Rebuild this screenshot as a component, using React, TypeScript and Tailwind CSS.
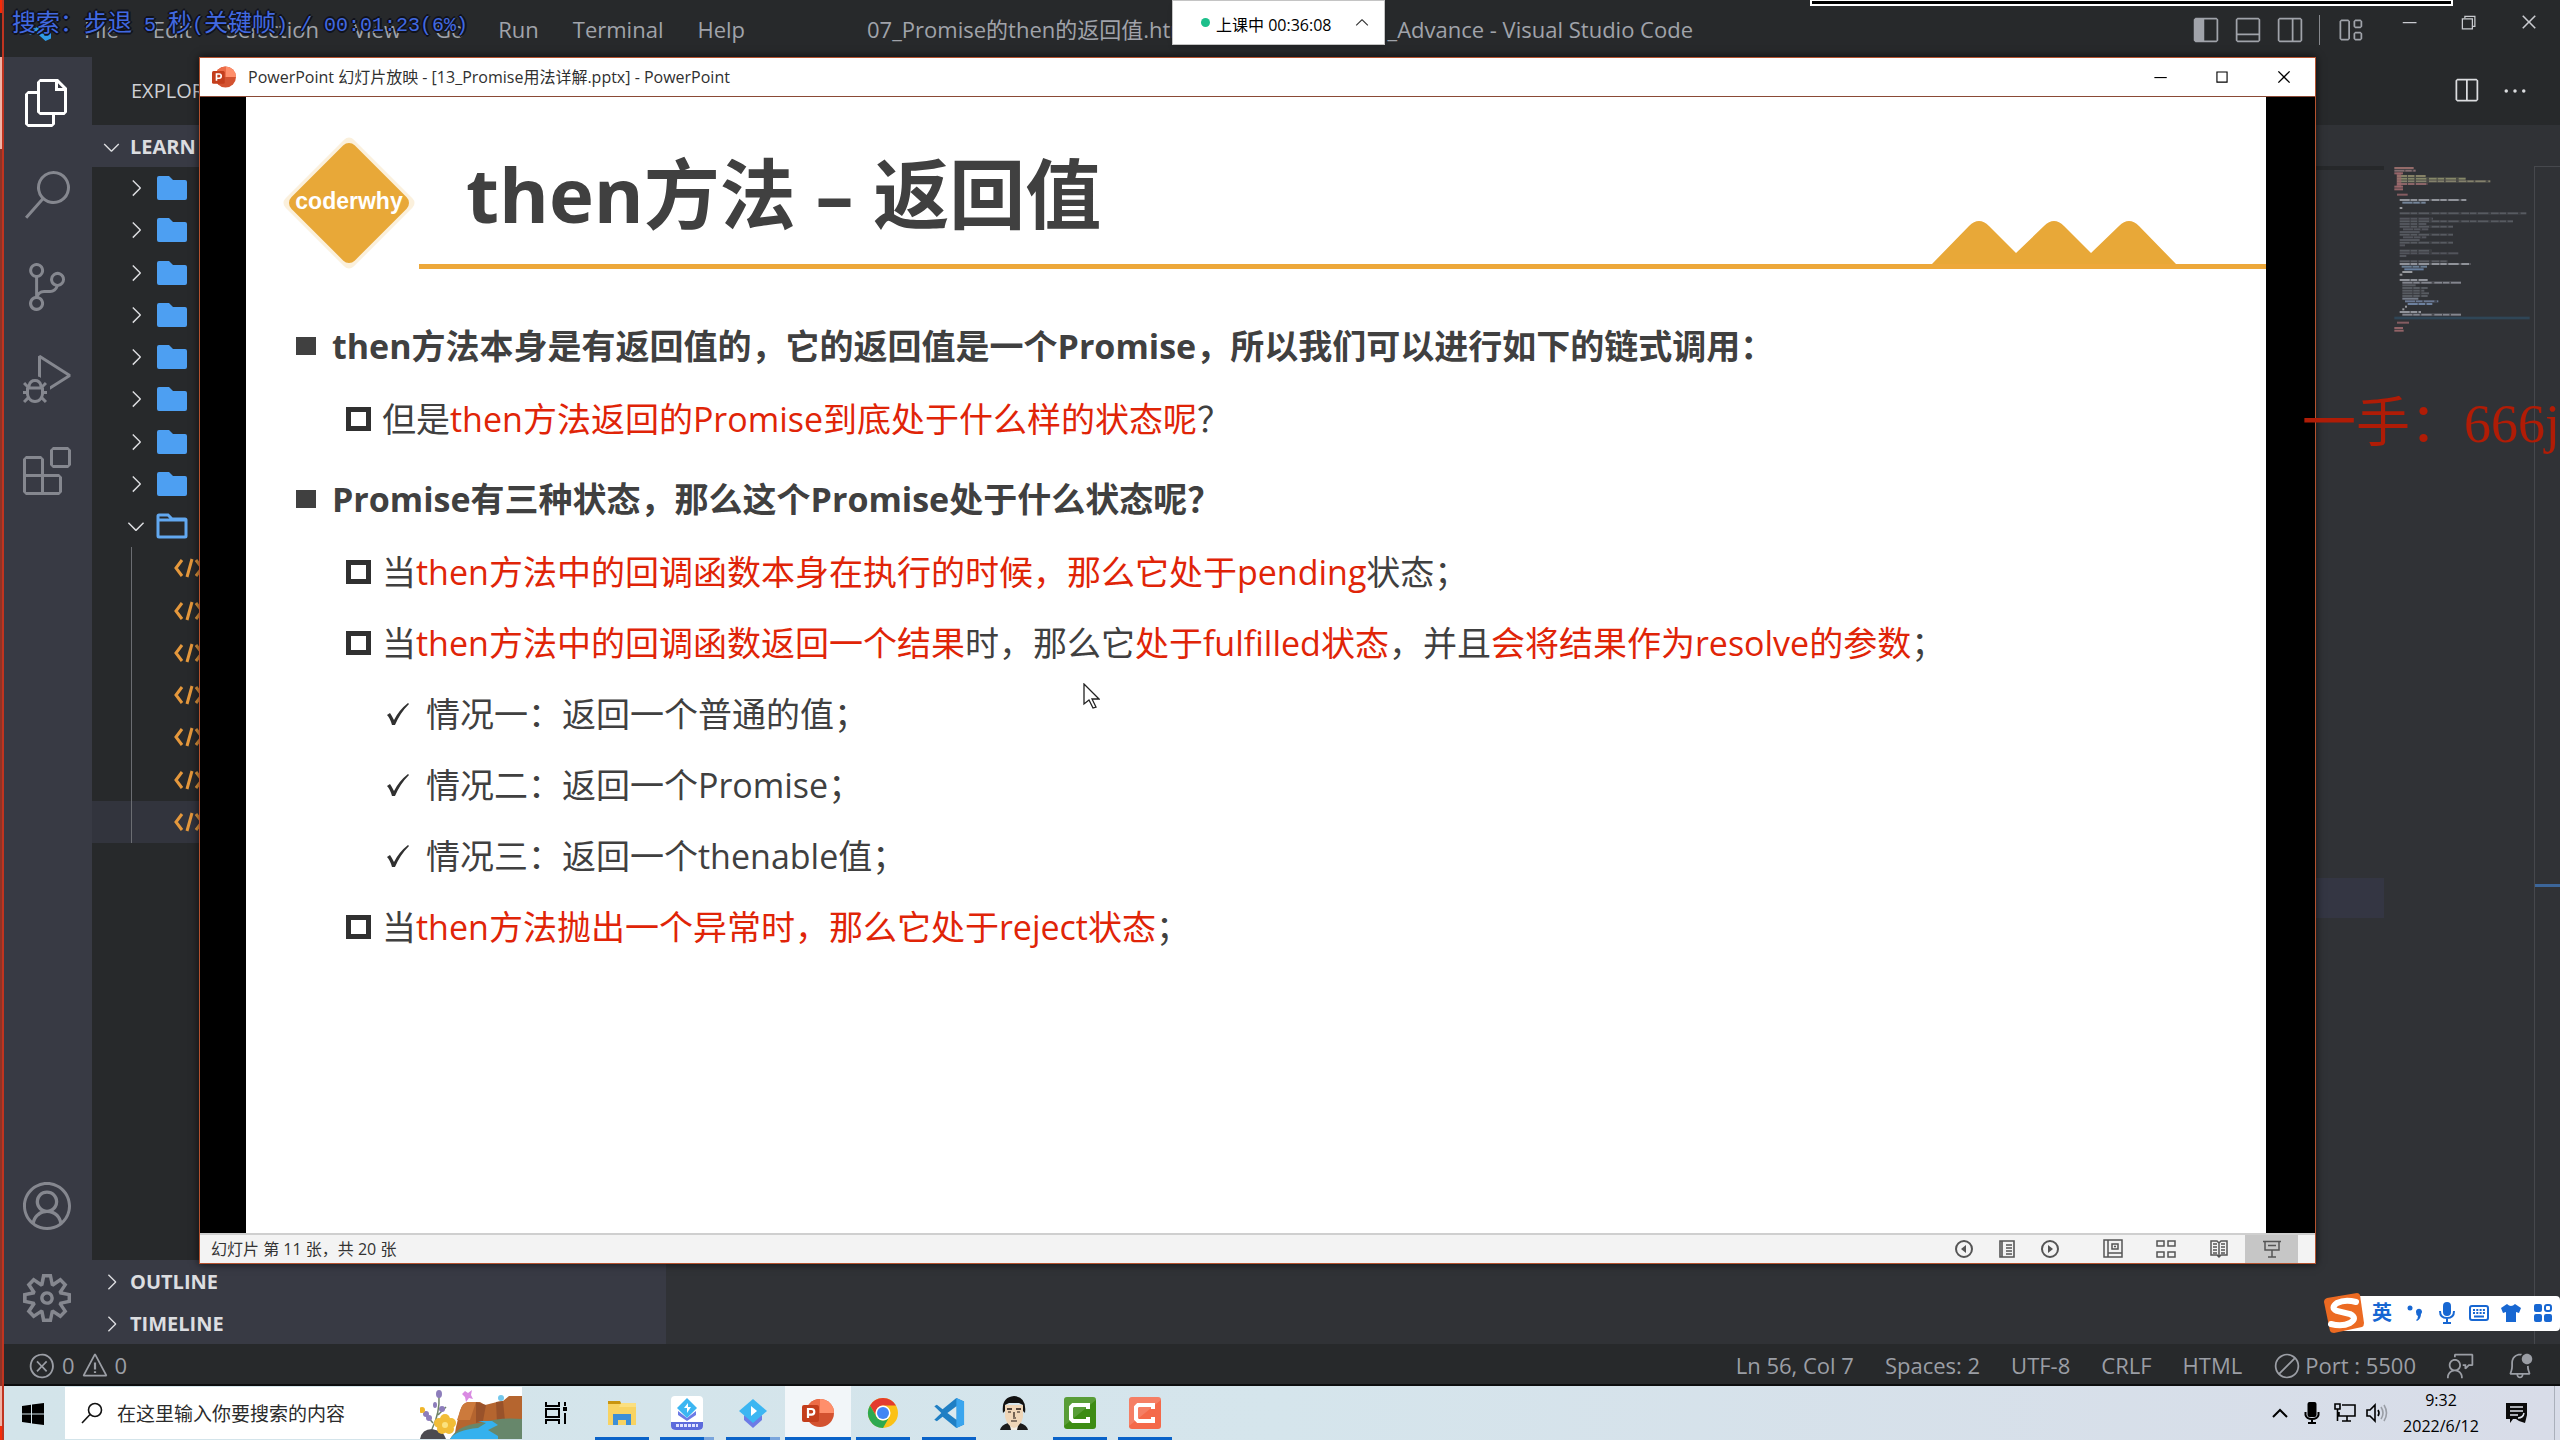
import React from 'react';
import {
  VscFiles, VscSearch, VscSourceControl, VscDebugAlt, VscExtensions, VscAccount, VscSettingsGear,
  VscChevronRight, VscChevronDown, VscChevronUp, VscLayoutSidebarLeft, VscLayoutPanelOff,
  VscLayoutSidebarRightOff, VscLayout, VscChromeMinimize, VscChromeRestore, VscChromeClose,
  VscChromeMaximize, VscSplitHorizontal, VscEllipsis, VscError, VscWarning, VscCircleSlash,
  VscFeedback, VscBellDot,
} from 'react-icons/vsc';

type IconType = React.ComponentType<{ className?: string }>;

function IconButton({ label, className, children }: { label: string; className?: string; children: React.ReactNode }) {
  return (
    <button type="button" aria-label={label} className={`flex shrink-0 items-center justify-center ${className ?? ''}`}>
      {children}
    </button>
  );
}

/* ---------- editor: title bar ---------- */

function VsCodeLogo({ className }: { className?: string }) {
  return (
    <svg viewBox="0 0 100 100" className={className} aria-hidden="true">
      <path d="M73 3 97 14v72L73 97 30 62 12 76 4 71 26 50 4 29l8-5 18 14z" fill="#1f7fc4" />
      <path d="M73 3 97 14v72L73 97z" fill="#3aa5ee" />
      <path d="M73 29v42L45 50z" fill="#dbe9ee" />
    </svg>
  );
}

function TitleBar() {
  const menus = ['File', 'Edit', 'Selection', 'View', 'Go', 'Run', 'Terminal', 'Help'];
  return (
    <header className="flex h-[57px] shrink-0 items-center bg-[#27292b] pt-[2px] text-[22px] text-[#a0a3aa]">
      <svg viewBox="0 0 24 24" className="ml-7 h-6 w-6" aria-hidden="true">
        <path d="M17.5 1 23 3.500v17L17.500 23 7 13.500 3 17 1 16V8l2-1 4 3.500z" fill="#2f9be8" />
      </svg>
      <nav className="ml-8 flex gap-[34px]">
        {menus.map((m) => (
          <button key={m} type="button">{m}</button>
        ))}
      </nav>
      <div className="ml-[122px] flex w-[826px] shrink-0 justify-between whitespace-nowrap">
        <span>07_Promise的then的返回值.html</span>
        <span>_Advance - Visual Studio Code</span>
      </div>
      <div className="ml-auto flex items-center text-[28px]">
        <IconButton label="Toggle primary side bar" className="w-[42px]"><VscLayoutSidebarLeft /></IconButton>
        <IconButton label="Toggle panel" className="w-[42px]"><VscLayoutPanelOff /></IconButton>
        <IconButton label="Toggle secondary side bar" className="w-[42px]"><VscLayoutSidebarRightOff /></IconButton>
        <span className="ml-2 h-[30px] w-px bg-[#85878c]" />
        <IconButton label="Customize layout" className="w-[60px]"><VscLayout /></IconButton>
      </div>
      <div className="mb-4 flex items-center text-xl text-[#c9cbd0]">
        <IconButton label="Minimize" className="w-[58px]"><VscChromeMinimize /></IconButton>
        <IconButton label="Restore" className="w-[60px]"><VscChromeRestore /></IconButton>
        <IconButton label="Close" className="w-[62px]"><VscChromeClose /></IconButton>
      </div>
    </header>
  );
}

/* ---------- editor: activity bar and explorer ---------- */

function ActivityBar() {
  const top: [string, IconType][] = [
    ['Explorer', VscFiles],
    ['Search', VscSearch],
    ['Source control', VscSourceControl],
    ['Run and debug', VscDebugAlt],
    ['Extensions', VscExtensions],
  ];
  const bottom: [string, IconType][] = [
    ['Accounts', VscAccount],
    ['Manage', VscSettingsGear],
  ];
  return (
    <nav className="flex w-[92px] shrink-0 flex-col justify-between bg-[#383a44] pl-[2px] text-5xl text-[#85878f]">
      <div>
        {top.map(([name, Icon], i) => (
          <IconButton key={name} label={name} className={i === 0 ? 'h-[92px] w-full text-white' : 'h-[92px] w-full'}>
            <Icon />
          </IconButton>
        ))}
      </div>
      <div>
        {bottom.map(([name, Icon]) => (
          <IconButton key={name} label={name} className="h-[92px] w-full"><Icon /></IconButton>
        ))}
      </div>
    </nav>
  );
}

function FolderIcon({ open }: { open?: boolean }) {
  return (
    <svg viewBox="0 0 32 26" className="h-[26px] w-8" aria-hidden="true">
      {open ? (
        <path d="M3 2h9l4 4h13q1 0 1 1v16q0 1-1 1H3q-1 0-1-1V3q0-1 1-1zM2 7h28" fill="none" stroke="#62a8f0" strokeWidth="3" />
      ) : (
        <path d="M3 1h10l4 4h12q2 0 2 2v16q0 2-2 2H3q-2 0-2-2V3q0-2 2-2z" fill="#4d9ff2" />
      )}
    </svg>
  );
}

function SectionHeader({ title, open }: { title: string; open?: boolean }) {
  return (
    <button type="button" className="flex h-[42px] w-full shrink-0 items-center bg-[#383a44] pl-[7px] pt-[2px] text-xl font-bold text-[#dcdde0]">
      <span className="mr-[6px] flex w-[25px] justify-center text-[26px]">{open ? <VscChevronDown /> : <VscChevronRight />}</span>
      {title}
    </button>
  );
}

function Explorer() {
  return (
    <aside className="flex w-[574px] shrink-0 flex-col bg-[#27292b]">
      <h2 className="flex h-[68px] shrink-0 items-center pl-[39px] text-xl text-[#cfd0d4]">EXPLORER</h2>
      <SectionHeader title="LEARN" open />
      <ul className="grid h-[676px] auto-rows-fr">
        {Array.from({ length: 9 }, (_, i) => (
          <li key={i} className="flex items-center pl-[31px]">
            <span className="mr-[7px] text-[26px] text-[#dcdde0]">{i === 8 ? <VscChevronDown /> : <VscChevronRight />}</span>
            <FolderIcon open={i === 8} />
          </li>
        ))}
        {Array.from({ length: 7 }, (_, i) => (
          <li key={i} className={i === 6 ? 'flex bg-[#32343d] pl-[39px]' : 'flex pl-[39px]'}>
            <div className="flex items-center border-l border-[#6b6d72] pl-10">
              <svg viewBox="0 0 36 20" className="h-5 w-9" fill="none" stroke="#e5983c" strokeWidth="3" aria-hidden="true">
                <path d="M10 2 4 10l6 8M20 1l-5 18M24 2l6 8-6 8" />
              </svg>
            </div>
          </li>
        ))}
      </ul>
      <div className="mt-auto">
        <SectionHeader title="OUTLINE" />
        <SectionHeader title="TIMELINE" />
      </div>
    </aside>
  );
}

/* ---------- editor: minimap ---------- */

const minimapLines: [number, number, number, string][] = [
  [0, 4, 58, '#a0716f'], [1, 4, 64, '#8d7478'], [2, 4, 26, '#9d686d'],
  [3, 12, 86, '#8f8a6c'], [4, 12, 206, '#90916f'], [5, 12, 280, '#8d8a72'], [6, 12, 92, '#976a6e'],
  [7, 4, 26, '#9d686d'], [8, 4, 26, '#9d686d'],
  [10, 12, 32, '#8e6166'],
  [12, 20, 200, '#9b9da5'], [13, 28, 70, '#7d8fa5'], [15, 20, 8, '#a5a6ab'],
  [17, 20, 380, '#5c5f66'], [19, 20, 100, '#565960'], [20, 20, 340, '#5c5f66'], [21, 20, 80, '#565960'],
  [22, 20, 160, '#5c5f66'], [23, 30, 76, '#565960'], [24, 20, 60, '#565960'], [25, 20, 160, '#5c5f66'],
  [26, 30, 70, '#565960'], [27, 20, 60, '#565960'], [28, 20, 160, '#5c5f66'], [29, 20, 16, '#565960'],
  [31, 20, 96, '#5c5f66'], [32, 20, 176, '#565960'], [33, 20, 20, '#565960'], [35, 20, 144, '#5f6268'],
  [36, 20, 212, '#9b9da5'], [37, 26, 76, '#71879f'], [38, 34, 58, '#6d86a8'], [39, 28, 30, '#a5a6ab'], [40, 20, 8, '#a5a6ab'],
  [42, 20, 84, '#9b9da5'], [43, 28, 176, '#8d8f98'], [44, 28, 40, '#5c5f66'], [45, 28, 76, '#5c5f66'],
  [46, 28, 66, '#5c5f66'], [47, 28, 80, '#5c5f66'], [48, 28, 76, '#5c5f66'], [49, 28, 48, '#7d8491'],
  [50, 36, 100, '#71809c'], [51, 44, 74, '#7489ab'], [52, 36, 6, '#a5a6ab'], [53, 28, 6, '#a5a6ab'],
  [54, 20, 64, '#9b9da5'], [55, 28, 176, '#8d8f98'],
  [58, 12, 36, '#8e6166'], [60, 4, 26, '#9d686d'], [61, 4, 28, '#9d686d'],
];

function Minimap() {
  return (
    <svg viewBox="0 0 414 528" className="h-[176px] w-[138px]" aria-hidden="true">
      <rect x="4" y="452" width="406" height="8" fill="#2f4657" />
      {minimapLines.map(([row, x, w, color], i) => (
        <rect key={i} x={x} y={row * 8 + 3} width={w} height="6" fill={color} opacity="0.900" />
      ))}
      {minimapLines.map(([row, x, w], i) =>
        w > 60 ? <path key={i} d={`M${x + 30} ${row * 8 + 6}H${x + w}`} stroke="#303236" strokeWidth="6" strokeDasharray="3 19 5 31 8 23" opacity="0.700" /> : null,
      )}
      <path d="M18 20v44" stroke="#9d686d" strokeWidth="14" opacity="0.700" />
    </svg>
  );
}

function EditorArea() {
  return (
    <main className="flex min-w-0 flex-1 flex-col bg-[#303236]">
      <div className="flex h-[68px] shrink-0 items-center justify-end bg-[#27292b] text-[28px] text-[#dcdde0]">
        <IconButton label="Split editor" className="w-12"><VscSplitHorizontal /></IconButton>
        <IconButton label="More actions" className="mr-5 w-[50px]"><VscEllipsis /></IconButton>
      </div>
      <div className="h-[41px] shrink-0" />
      <div className="flex flex-1 justify-end">
        <div className="flex-1">
          <div className="h-1 bg-[#26282a]" />
          <div className="mt-[708px] h-10 bg-[#343643]" />
        </div>
        <div className="ml-[9px]"><Minimap /></div>
        <div className="ml-[3px] w-[26px] border-l border-t border-[#46484d] pt-[717px]">
          <div className="h-[3px] bg-[#3c669a]" />
        </div>
      </div>
    </main>
  );
}

function StatusBar() {
  return (
    <footer className="flex h-[42px] shrink-0 items-center border-b-2 border-[#0c0d0e] bg-[#27292b] pt-[3px] text-[22px] text-[#9b9ea5]">
      <button type="button" className="ml-7 flex items-center gap-[6px]">
        <VscError className="text-[28px]" /><span>0</span>
        <VscWarning className="text-[28px]" /><span>0</span>
      </button>
      <div className="ml-auto flex items-center gap-[31px] whitespace-nowrap">
        <button type="button">Ln 56, Col 7</button>
        <button type="button">Spaces: 2</button>
        <button type="button">UTF-8</button>
        <button type="button">CRLF</button>
        <button type="button">HTML</button>
        <button type="button" className="flex items-center gap-1"><VscCircleSlash className="text-[28px]" />Port : 5500</button>
        <IconButton label="Feedback" className="text-[28px]"><VscFeedback /></IconButton>
        <IconButton label="Notifications" className="mr-[26px] text-[28px]"><VscBellDot /></IconButton>
      </div>
    </footer>
  );
}

/* ---------- slide show window ---------- */

function PowerPointLogo({ className }: { className?: string }) {
  return (
    <svg viewBox="0 0 32 32" className={className} aria-hidden="true">
      <circle cx="18" cy="16" r="14" fill="#d35230" />
      <path d="M18 2a14 14 0 0 1 14 14H18z" fill="#ff8f6b" />
      <path d="M4 16a14 14 0 0 1 14-14v14z" fill="#ed6c47" />
      <rect x="0" y="8" width="17" height="17" rx="2" fill="#c43e1c" />
      <path d="M6 21v-9h3.500a2.800 2.800 0 0 1 0 5.600H6" fill="none" stroke="#fff" strokeWidth="2.200" />
    </svg>
  );
}

function Red({ children }: { children: React.ReactNode }) {
  return <span className="text-[#e02407]">{children}</span>;
}

function Heading({ children }: { children: React.ReactNode }) {
  return (
    <li className="flex h-[74px] items-center font-bold">
      <span className="mr-4 h-[18px] w-5 bg-[#404040]" />
      <span>{children}</span>
    </li>
  );
}

function Point({ children }: { children: React.ReactNode }) {
  return (
    <li className="flex h-[71px] items-center pl-[50px]">
      <span className="mr-[11px] h-6 w-[25px] border-[5px] border-[#303030]" />
      <span>{children}</span>
    </li>
  );
}

function Case({ children }: { children: React.ReactNode }) {
  return (
    <li className="flex h-[71px] items-center pl-[90px]">
      <svg viewBox="0 0 24 24" className="mr-4 h-6 w-6" aria-hidden="true">
        <path d="M1 13l3-2q2 3 4 7Q13 8 22 1l1 1Q14 11 9 23H6Q4 16 1 13z" fill="#303030" />
      </svg>
      <span>{children}</span>
    </li>
  );
}

function Slide() {
  return (
    <article className="min-w-0 flex-1 bg-white text-[#404040]">
      <div className="flex h-[172px] items-end">
        <svg viewBox="0 0 140 140" className="mb-[-4px] ml-[33px] h-[140px] w-[140px] shrink-0" role="img" aria-label="coderwhy">
          <path d="M70 11 129 70 70 129 11 70z" fill="#fbf0dc" stroke="#fbf0dc" strokeWidth="13" strokeLinejoin="round" />
          <path d="M70 18 122 70 70 122 18 70z" fill="#e8a838" stroke="#e8a838" strokeWidth="16" strokeLinejoin="round" />
          <text x="70" y="76" textAnchor="middle" fill="#fff" fontSize="23" fontWeight="700" fontFamily="Liberation Sans, Arial, sans-serif">coderwhy</text>
        </svg>
        <div className="flex h-full min-w-0 flex-1 flex-col justify-end border-b-[5px] border-[#eda83a]">
          <div className="flex items-end justify-between">
            <h1 className="mb-[22px] ml-[47px] whitespace-nowrap text-[76px] font-bold leading-[96px]">then方法 – 返回值</h1>
            <svg viewBox="0 0 244 44" className="mr-[90px] h-11 w-[244px]" aria-hidden="true">
              <path d="M0 44 37 6q10-10 20 0L84 33l28-27q10-10 20 0l27 27 28-27q10-10 20 0l37 38z" fill="#e8a838" />
            </svg>
          </div>
        </div>
      </div>
      <ul className="mt-10 whitespace-nowrap pl-[50px] text-[34px] leading-[48px]">
        <Heading>then方法本身是有返回值的，它的返回值是一个Promise，所以我们可以进行如下的链式调用：</Heading>
        <Point>但是<Red>then方法返回的Promise到底处于什么样的状态呢</Red>？</Point>
        <li aria-hidden="true" className="h-2" />
        <Heading>Promise有三种状态，那么这个Promise处于什么状态呢？</Heading>
        <Point>当<Red>then方法中的回调函数本身在执行的时候，那么它处于pending</Red>状态；</Point>
        <Point>当<Red>then方法中的回调函数返回一个结果</Red>时，那么它<Red>处于fulfilled状态</Red>，并且<Red>会将结果作为resolve的参数</Red>；</Point>
        <Case>情况一：返回一个普通的值；</Case>
        <Case>情况二：返回一个Promise；</Case>
        <Case>情况三：返回一个thenable值；</Case>
        <Point>当<Red>then方法抛出一个异常时，那么它处于reject状态</Red>；</Point>
      </ul>
    </article>
  );
}

function PptStatusIcons() {
  return (
    <div className="ml-auto mr-[17px] flex h-full items-center text-[#555]">
      <IconButton label="Previous slide" className="w-[43px]">
        <svg viewBox="0 0 20 20" className="h-5 w-5" fill="none" stroke="currentColor" strokeWidth="2"><circle cx="10" cy="10" r="8" /><path d="M12 6v8l-5-4z" fill="currentColor" stroke="none" /></svg>
      </IconButton>
      <IconButton label="Slide menu" className="w-[43px]">
        <svg viewBox="0 0 18 20" className="h-5 w-[18px]" fill="none" stroke="currentColor" strokeWidth="1.600"><path d="M2 2h14v16H2zM4 2v16M8 6h6M8 9h6M8 12h6M8 15h6" /></svg>
      </IconButton>
      <IconButton label="Next slide" className="w-[43px]">
        <svg viewBox="0 0 20 20" className="h-5 w-5" fill="none" stroke="currentColor" strokeWidth="2"><circle cx="10" cy="10" r="8" /><path d="M8 6v8l5-4z" fill="currentColor" stroke="none" /></svg>
      </IconButton>
      <IconButton label="Normal view" className="ml-[15px] w-[53px]">
        <svg viewBox="0 0 20 20" className="h-5 w-5" fill="none" stroke="currentColor" strokeWidth="1.500"><path d="M1 1h18v17H1zM5 1v17M5 14h14M9 5h6v5H9zM11 7.500h2" /></svg>
      </IconButton>
      <IconButton label="Slide sorter" className="w-[53px]">
        <svg viewBox="0 0 20 20" className="h-5 w-5" fill="none" stroke="currentColor" strokeWidth="1.500"><path d="M1 2h7v5H1zM12 2h7v5h-7zM1 13h7v5H1zM12 13h7v5h-7z" /></svg>
      </IconButton>
      <IconButton label="Reading view" className="w-[53px]">
        <svg viewBox="0 0 20 20" className="h-5 w-5" fill="none" stroke="currentColor" strokeWidth="1.500"><path d="M10 4 8 2H2v14h6l2 2 2-2h6V2h-6zM10 4v14M4 5h4M4 8h4M4 11h4M12 5h4M12 8h4M12 11h4M4 14h4M12 14h4" /></svg>
      </IconButton>
      <IconButton label="Slide show" className="h-full w-[53px] bg-[#c6c6c6]">
        <svg viewBox="0 0 20 20" className="h-5 w-5" fill="none" stroke="currentColor" strokeWidth="1.500"><path d="M1 2.500h18M3 3v8h14V3M6 6.500h8M10 11v7M6 18h8" /></svg>
      </IconButton>
    </div>
  );
}

function SlideShowWindow() {
  return (
    <section className="absolute bottom-[176px] left-[199px] right-[244px] top-[57px] flex flex-col border border-[#b4522f] bg-white shadow-[0_0_8px_rgba(0,0,0,0.7)]">
      <div className="flex h-[39px] shrink-0 items-center border-b border-[#8a4a36] text-base text-[#303030]">
        <PowerPointLogo className="ml-3 h-6 w-6" />
        <span className="ml-3 whitespace-nowrap">PowerPoint 幻灯片放映 - [13_Promise用法详解.pptx] - PowerPoint</span>
        <div className="ml-auto flex text-lg text-black">
          <IconButton label="Minimize slide show" className="w-[62px]"><VscChromeMinimize /></IconButton>
          <IconButton label="Maximize slide show" className="w-[62px]"><VscChromeMaximize /></IconButton>
          <IconButton label="Close slide show" className="w-[62px]"><VscChromeClose /></IconButton>
        </div>
      </div>
      <div className="flex min-h-0 flex-1 bg-black pl-[46px] pr-[49px]">
        <Slide />
      </div>
      <div className="flex h-[30px] shrink-0 items-center border-t-2 border-[#cfcfcf] bg-[#f3f3f3] pl-[11px] text-base text-[#333]">
        <span className="whitespace-nowrap">幻灯片 第 11 张，共 20 张</span>
        <PptStatusIcons />
      </div>
    </section>
  );
}

/* ---------- floating overlays ---------- */

function ClassTimer() {
  return (
    <div className="absolute left-[1172px] top-0 flex h-[45px] w-[213px] items-center border border-[#c4c4c4] bg-white text-base text-black shadow-md">
      <span className="ml-7 h-[9px] w-[9px] rounded-full bg-[#1dbf8b]" />
      <span className="ml-[6px] mt-1 whitespace-nowrap">上课中 00:36:08</span>
      <IconButton label="Collapse timer" className="ml-auto mr-3 text-xl text-[#333]"><VscChevronUp /></IconButton>
    </div>
  );
}

function PlayerMessage() {
  return (
    <p className="absolute left-3 top-[9px] whitespace-pre font-['Liberation_Mono','Noto_Sans_CJK_SC',monospace] text-xl leading-8 text-[#4169e1] [text-shadow:-2px_0_#10121c,2px_0_#10121c,0_-2px_#10121c,0_2px_#10121c,1px_1px_#10121c,-1px_-1px_#10121c]">
      <span className="text-2xl leading-8">搜索：步退</span> 5 <span className="text-2xl leading-8">秒</span>(<span className="text-2xl leading-8">关键帧</span>) / 00:01:23(6%)
    </p>
  );
}

function InputMethodBar() {
  return (
    <div className="absolute bottom-[107px] right-0 flex h-10 items-center text-[#1767d2]">
      <svg viewBox="0 0 42 42" className="z-10 h-[42px] w-[42px]" aria-hidden="true">
        <path d="M4 6 34 1q2 0 3 2l4 28q0 3-2 4L11 41q-3 0-4-2L1 10q0-3 3-4z" fill="#ec6a22" />
        <path d="M33 10Q22 7 14 11q-7 5 0 8l13 3q8 4 0 9-8 4-19 1" fill="none" stroke="#fff" strokeWidth="6" strokeLinecap="round" />
      </svg>
      <div className="-ml-7 flex h-[35px] items-center rounded-sm bg-white pl-7 pr-px">
        <button type="button" className="w-[34px] text-xl font-bold leading-6">英</button>
        <IconButton label="Punctuation" className="w-8">
          <svg viewBox="0 0 18 18" className="h-[18px] w-[18px]" fill="currentColor"><circle cx="4" cy="4" r="2.500" /><path d="M10 8a3 3 0 1 1 5 2q0 5-4 7l-1-1q2-1 2-4-2-1-2-4z" /></svg>
        </IconButton>
        <IconButton label="Voice input" className="w-8">
          <svg viewBox="0 0 18 22" className="h-[22px] w-[18px]" fill="none" stroke="currentColor" strokeWidth="2"><rect x="6" y="1" width="6" height="12" rx="3" fill="currentColor" /><path d="M2 9q0 7 7 7t7-7M9 16v5M5 21h8" /></svg>
        </IconButton>
        <IconButton label="Soft keyboard" className="w-8">
          <svg viewBox="0 0 20 18" className="h-[18px] w-5" fill="none" stroke="currentColor" strokeWidth="2"><rect x="1" y="2" width="18" height="14" rx="2" /><path d="M4 6h12M4 9h12" strokeDasharray="2 1.300" /><path d="M5 12.500h10" /></svg>
        </IconButton>
        <IconButton label="Skins" className="w-8">
          <svg viewBox="0 0 20 20" className="h-5 w-5" fill="currentColor"><path d="M6 1q4 4 8 0l6 4-2 5-3-1v10H5V9l-3 1-2-5z" /></svg>
        </IconButton>
        <IconButton label="Toolbox" className="w-8">
          <svg viewBox="0 0 20 20" className="h-5 w-5" fill="currentColor"><rect x="1" y="1" width="8" height="8" rx="2" /><rect x="12" y="2" width="6" height="6" rx="2" fill="none" stroke="currentColor" strokeWidth="2" /><rect x="1" y="11" width="8" height="8" rx="2" /><rect x="11" y="11" width="8" height="8" rx="2" /></svg>
        </IconButton>
      </div>
    </div>
  );
}

function RecordingEdge() {
  return (
    <div className="absolute inset-y-0 left-0 flex w-1 flex-col border-r-2 border-[#c03420]">
      <div className="h-[13px] bg-[#f52b08]" />
      <div className="h-11 bg-[#2b2324]" />
      <div className="h-[92px] bg-[#f0b3a6]" />
      <div className="flex-1 bg-[#8c3428]" />
      <div className="h-10 bg-[#f0b3a6]" />
      <div className="h-[14px] bg-[#f52b08]" />
    </div>
  );
}

/* ---------- taskbar ---------- */

function SearchArt() {
  return (
    <svg viewBox="0 0 102 52" className="ml-auto h-full w-[102px]" aria-hidden="true">
      <path d="M36 40 40 24q2-8 8-9h12l5 3 12-3 6-1 6-5h13v43H34z" fill="#b5652f" />
      <path d="M56 15l10 3-3 16-7 2zM76 15l7-1 2 20-8 2z" fill="#99522a" />
      <path d="M40 24q2-8 8-9h8l-6 18H37z" fill="#cc7a3c" />
      <path d="M30 52q8-14 30-16 20-6 42-4v20z" fill="#67876b" />
      <path d="M30 52q6-9 28-11l8-5-8-2 14 0 6 4-10 5 10 6v3z" fill="#35b1ee" />
      <path d="M0 52q2-10 12-10 12 2 14 10z" fill="#4c4b50" />
      <path d="M12 42Q20 26 19 8M13 36 6 28M18 28l8-8" fill="none" stroke="#6f8268" strokeWidth="1.500" />
      <g fill="#8d7dbb"><ellipse cx="19" cy="7" rx="3" ry="4" /><ellipse cx="15" cy="18" rx="2" ry="3" /><ellipse cx="22" cy="22" rx="3" ry="3" /><ellipse cx="6" cy="27" rx="3" ry="3" /><ellipse cx="9" cy="31" rx="3" ry="3" /></g>
      <g fill="#f2bd37"><circle cx="25" cy="32" r="5" /><circle cx="19" cy="36" r="5" /><circle cx="31" cy="36" r="5" /><circle cx="22" cy="42" r="5" /><circle cx="29" cy="42" r="5" /><circle cx="25" cy="38" r="6" /></g>
      <circle cx="25" cy="38" r="3" fill="#fbe27e" />
      <path d="M45 4l3 2 4-3-1 5 2 4-4-1-3 4-1-5-3-3z" fill="#d98ae2" />
      <circle cx="81" cy="11" r="3" fill="#74c8ec" /><circle cx="2" cy="23" r="3" fill="#f0b62a" />
    </svg>
  );
}

function FileExplorerIcon() {
  return (
    <svg viewBox="0 0 32 32" className="h-8 w-8" aria-hidden="true">
      <path d="M2 4h12l2 4H2z" fill="#c9950f" /><path d="M2 7h28v21H2z" fill="#f8d362" /><path d="M15 6h15v4H13z" fill="#fbdf80" />
      <path d="M7 28V17h18v11h-5v-5h-8v5z" fill="#3d8fd8" />
    </svg>
  );
}

function CourseIcon() {
  return (
    <svg viewBox="0 0 32 34" className="h-[34px] w-8" aria-hidden="true">
      <rect width="32" height="34" rx="4" fill="#fff" />
      <path d="M7 15l9 7 9-7v4l-9 6-9-6z" fill="#6c7be6" /><path d="M16 2l10 10-10 10L6 12z" fill="#3cb6f2" /><path d="M17 7l-4 5h3v5l4-6h-3z" fill="#fff" />
      <path d="M0 26h32v4q0 4-5 4H5q-5 0-5-4z" fill="#5c6bdc" /><path d="M5 29.500h22" stroke="#dfe3ff" strokeWidth="3" strokeDasharray="3 1" />
    </svg>
  );
}

function PlayerIcon() {
  return (
    <svg viewBox="0 0 32 32" className="h-8 w-8" aria-hidden="true">
      <path d="M7 18l9 6 9-6v5l-9 8-9-8z" fill="#6c7be6" /><path d="M16 2l14 12-14 12L2 14z" fill="#3cb6f2" /><path d="M14 9v10l6-5z" fill="#fff" />
    </svg>
  );
}

function ChromeIcon() {
  return (
    <svg viewBox="0 0 32 32" className="h-8 w-8" aria-hidden="true">
      <circle cx="16" cy="16" r="15" fill="#fbc116" />
      <path d="M3 8.500A15 15 0 0 1 29 8.500H16a7.500 7.500 0 0 0-6.500 11z" fill="#e33b2e" />
      <path d="M3 8.500 9.500 19.700a7.500 7.500 0 0 0 13 0L16 31A15 15 0 0 1 3 8.500z" fill="#2da94f" />
      <circle cx="16" cy="16" r="7.500" fill="#fff" /><circle cx="16" cy="16" r="6" fill="#4285f4" />
    </svg>
  );
}

function PortraitIcon() {
  return (
    <svg viewBox="0 0 30 34" className="h-[34px] w-[30px]" aria-hidden="true">
      <path d="M1 34q1-5 8-7h12q7 2 8 7z" fill="#1b1b1b" /><path d="M10 26h10l-2 8h-6z" fill="#f4efe6" />
      <path d="M6 9h18v12q-2 9-9 11-7-2-9-11z" fill="#efd6b8" />
      <path d="M4 17Q2 1 15 0q13 1 11 17l-2-2V9l-4-2H10L6 9v6z" fill="#111" />
      <path d="M8 13h5M17 13h5" stroke="#201510" strokeWidth="1.600" /><path d="M9 16h3M18 16h3M15 16v5M12 25h6M14 22h3" stroke="#201510" strokeWidth="1.200" />
    </svg>
  );
}

function CamtasiaIcon({ tone }: { tone: 'green' | 'coral' }) {
  return (
    <svg viewBox="0 0 32 32" className="h-8 w-8" aria-hidden="true">
      <rect width="32" height="32" rx="3" fill={tone === 'green' ? '#3d8c14' : '#f4694a'} />
      <path d="M0 3q0-3 3-3h26q3 0 3 3L0 29z" fill="#fff" opacity="0.150" />
      <path d="M24 12V8H9l-2 2v12l2 2h15v-4" fill="none" stroke="#fff" strokeWidth="4" />
    </svg>
  );
}

function Taskbar() {
  const apps: { name: string; icon: React.ReactNode; line: 'one' | 'many' | 'active' | 'none' }[] = [
    { name: 'File Explorer', icon: <FileExplorerIcon />, line: 'one' },
    { name: 'Classroom', icon: <CourseIcon />, line: 'many' },
    { name: 'Player', icon: <PlayerIcon />, line: 'many' },
    { name: 'PowerPoint', icon: <PowerPointLogo className="h-8 w-8" />, line: 'active' },
    { name: 'Chrome', icon: <ChromeIcon />, line: 'one' },
    { name: 'Visual Studio Code', icon: <VsCodeLogo className="h-8 w-8" />, line: 'one' },
    { name: 'Portrait', icon: <PortraitIcon />, line: 'none' },
    { name: 'Camtasia', icon: <CamtasiaIcon tone="green" />, line: 'one' },
    { name: 'Camtasia Recorder', icon: <CamtasiaIcon tone="coral" />, line: 'one' },
  ];
  return (
    <div className="flex h-[54px] shrink-0 items-stretch bg-linear-to-r from-[#d3e4ea] via-[#d5e5ec] to-[#d8dce8] text-black">
      <IconButton label="Start" className="w-[65px] pt-[2px]">
        <svg viewBox="0 0 22 22" className="h-[22px] w-[22px]" fill="currentColor"><path d="M0 3l9-1.300V10.500H0zM10 1.500 22 0v10.500H10zM0 11.500h9v8.800L0 19zM10 11.500h12V22l-12-1.500z" /></svg>
      </IconButton>
      <label className="mb-px mt-px flex w-[457px] items-center bg-white">
        <svg viewBox="0 0 22 22" className="ml-4 h-[22px] w-[22px] shrink-0" fill="none" stroke="#111" strokeWidth="1.600"><circle cx="14" cy="8" r="6.500" /><path d="M9 12.500 1 21" /></svg>
        <input type="text" aria-label="搜索" placeholder="在这里输入你要搜索的内容" className="ml-[14px] w-[240px] bg-transparent pt-[2px] text-[19px] placeholder:text-[#2b2b2b] focus:outline-none" />
        <SearchArt />
      </label>
      <IconButton label="Task view" className="w-[67px]">
        <svg viewBox="0 0 22 22" className="h-[22px] w-[22px]" fill="none" stroke="currentColor" strokeWidth="2"><path d="M1 0v4h13V0M1 22v-4h13v4M1 7h13v8H1zM20 0v4M20 11v11" /><path d="M18 5h4v4h-4z" fill="currentColor" stroke="none" /></svg>
      </IconButton>
      <nav className="grid w-[589px] grid-cols-9">
        {apps.map((a) => (
          <button
            key={a.name}
            type="button"
            aria-label={a.name}
            className={a.line === 'active' ? 'flex flex-col items-center bg-[#f2f6f9]' : 'flex flex-col items-center'}
          >
            <span className="flex flex-1 items-center pt-[3px]">{a.icon}</span>
            {a.line === 'active' && <span className="h-[3px] w-full bg-[#0a63c9]" />}
            {a.line === 'one' && <span className="h-[3px] w-[54px] bg-[#0a63c9]" />}
            {a.line === 'many' && <span className="h-[3px] w-[54px] border-r-[10px] border-[#7aa5dc] bg-[#0a63c9]" />}
            {a.line === 'none' && <span className="h-[3px]" />}
          </button>
        ))}
      </nav>
      <div className="ml-auto flex items-center">
        <IconButton label="Show hidden icons" className="w-8">
          <svg viewBox="0 0 16 10" className="h-[10px] w-4" fill="none" stroke="currentColor" strokeWidth="2"><path d="M1 9l7-7 7 7" /></svg>
        </IconButton>
        <IconButton label="Microphone" className="w-8">
          <svg viewBox="0 0 16 22" className="h-[22px] w-4" fill="none" stroke="currentColor" strokeWidth="2"><rect x="4.500" y="1" width="7" height="13" rx="1" fill="currentColor" /><path d="M1.500 10v3q1 4 6.500 4t6.500-4v-3M8 17v4M4 21h8" /></svg>
        </IconButton>
        <IconButton label="Network" className="w-[33px]">
          <svg viewBox="0 0 22 20" className="h-5 w-[22px]" fill="none" stroke="currentColor" strokeWidth="1.600"><path d="M8 2h13v11H5V9M1 1h5v5H1zM3.500 6v12M13 13v5M8 18h9" /></svg>
        </IconButton>
        <IconButton label="Volume" className="w-8">
          <svg viewBox="0 0 22 20" className="h-5 w-[22px]" fill="none" stroke="currentColor" strokeWidth="1.600"><path d="M1 7h3l5-5v16l-5-5H1zM12 7q2 3 0 6" /><path d="M15 4q4 6 0 12M18 2q5 8 0 16" stroke="#9a9ea6" /></svg>
        </IconButton>
        <div className="ml-[9px] flex w-[78px] flex-col items-center text-base leading-[26px]">
          <span>9:32</span>
          <span>2022/6/12</span>
        </div>
        <IconButton label="Notification centre" className="ml-2 w-[58px]">
          <svg viewBox="0 0 24 22" className="h-[22px] w-6" aria-hidden="true"><path d="M1 1h21v12l-2 8-6-2-3-2H8l-3 4v-4H1z" fill="#0a0a0a" /><path d="M5 5h13M5 9h13M5 13h8" stroke="#dfe4ec" strokeWidth="1.600" /><path d="M19 11q-1 5-6 5" fill="none" stroke="#dfe4ec" strokeWidth="1.500" /></svg>
        </IconButton>
        <span className="ml-2 mr-[5px] h-[54px] w-px bg-[#aab0bb]" />
      </div>
    </div>
  );
}

export default function App() {
  return (
    <div className="relative flex min-h-screen w-full flex-col overflow-hidden font-['Open_Sans','Noto_Sans_CJK_SC',sans-serif]">
      <div className="flex flex-1 flex-col">
        <TitleBar />
        <div className="flex flex-1">
          <ActivityBar />
          <Explorer />
          <EditorArea />
        </div>
        <StatusBar />
      </div>
      <Taskbar />

      <SlideShowWindow />
      <ClassTimer />
      <div className="absolute right-[107px] top-0 h-[6px] w-[643px] border-2 border-t border-white bg-black" />
      <PlayerMessage />
      <p className="absolute left-[2302px] top-[384px] whitespace-nowrap font-['Liberation_Serif','Noto_Sans_CJK_SC',serif] text-[54px] leading-[80px] text-[#b01c06]">
        一手：666j
      </p>
      <InputMethodBar />
      <svg viewBox="0 0 17 26" className="absolute left-[1083px] top-[683px] h-[26px] w-[17px]" aria-hidden="true">
        <path d="M1 1v20l5-4 4 8 3-1-4-8h7z" fill="#fff" stroke="#222" strokeWidth="1.300" />
      </svg>
      <RecordingEdge />
    </div>
  );
}
